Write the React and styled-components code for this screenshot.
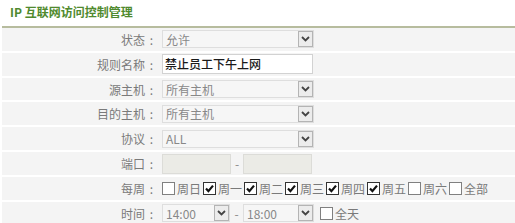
import React from 'react';
import styled, { createGlobalStyle } from 'styled-components';

const GlobalStyle = createGlobalStyle`
  body {
    margin: 0;
    background: #ffffff;
    font-family: "Noto Sans CJK SC", "Noto Sans", sans-serif;
    font-size: 12px;
  }
`;

const days = [
  { name: '周日', on: false },
  { name: '周一', on: true },
  { name: '周二', on: true },
  { name: '周三', on: true },
  { name: '周四', on: true },
  { name: '周五', on: true },
  { name: '周六', on: false },
  { name: '全部', on: false },
];

const Check = ({ on, label }) => (
  <CheckItem>
    <Box on={on ? 1 : 0}>
      {on && (
        <svg width="11" height="11" viewBox="0 0 11 11">
          <path d="M2 5.6 L4.4 8.2 L9 2.6" fill="none" stroke="#111" strokeWidth="2.2" />
        </svg>
      )}
    </Box>
    <CheckText>{label}</CheckText>
  </CheckItem>
);

const Select = ({ value, width }) => (
  <SelectBox width={width}>
    <SelectText>{value}</SelectText>
    <Arrow>
      <svg width="9" height="6" viewBox="0 0 9 6">
        <path d="M1 1 L4.5 4.5 L8 1" fill="none" stroke="#444" strokeWidth="1.8" />
      </svg>
    </Arrow>
  </SelectBox>
);

const Row = ({ label, children }) => (
  <RowWrap>
    <Label>
      {label}
      <Colon>:</Colon>
    </Label>
    <Field>{children}</Field>
  </RowWrap>
);

export default function App() {
  return (
    <Page>
      <GlobalStyle />
      <Title>IP 互联网访问控制管理</Title>
      <Table>
        <Row label="状态">
          <Select value="允许" width={152} />
        </Row>
        <Row label="规则名称">
          <TextInput>禁止员工下午上网</TextInput>
        </Row>
        <Row label="源主机">
          <Select value="所有主机" width={152} />
        </Row>
        <Row label="目的主机">
          <Select value="所有主机" width={152} />
        </Row>
        <Row label="协议">
          <Select value="ALL" width={152} />
        </Row>
        <Row label="端口">
          <PortInput />
          <Dash>-</Dash>
          <PortInput />
        </Row>
        <Row label="每周">
          <Checks>
            {days.map((d) => (
              <Check key={d.name} on={d.on} label={d.name} />
            ))}
          </Checks>
        </Row>
        <Row label="时间">
          <Select value="14:00" width={68} />
          <Dash wide>-</Dash>
          <Select value="18:00" width={71} />
          <Spacer />
          <Check on={false} label="全天" />
        </Row>
      </Table>
    </Page>
  );
}

const Page = styled.div`
  width: 515px;
  height: 223px;
  overflow: hidden;
`;

const Title = styled.div`
  box-sizing: border-box;
  height: 28px;
  margin-left: 2px;
  padding-left: 8px;
  line-height: 24px;
  color: #4f8a2e;
  font-weight: bold;
  font-size: 12px;
  border-bottom: 2px solid #b7bc9e;
`;

const Table = styled.div`
  display: flex;
  flex-direction: column;
  margin-left: 2px;
`;

const RowWrap = styled.div`
  display: flex;
  align-items: center;
  height: 22.83px;
  background: #f4f4f4;
  border-bottom: 2px solid #ffffff;
`;

const Label = styled.div`
  display: flex;
  justify-content: flex-end;
  width: 156px;
  flex: none;
  color: #7a7a7a;
  white-space: nowrap;
`;

const Colon = styled.span`
  width: 13px;
  text-align: center;
`;

const Field = styled.div`
  display: flex;
  align-items: center;
  padding-left: 4px;
`;

const SelectBox = styled.div`
  display: flex;
  align-items: center;
  justify-content: space-between;
  width: ${(p) => p.width}px;
  height: 18px;
  box-sizing: border-box;
  border: 1px solid #dedede;
  background: #f6f6f6;
`;

const SelectText = styled.span`
  padding-left: 3px;
  color: #888888;
  white-space: nowrap;
`;

const Arrow = styled.span`
  display: flex;
  align-items: center;
  justify-content: center;
  width: 15px;
  height: 16px;
  box-sizing: border-box;
  border: 1px solid #b4b4b4;
  background: #ececec;
`;

const TextInput = styled.div`
  width: 151px;
  height: 20px;
  box-sizing: border-box;
  border: 1px solid #d2d2d2;
  background: #ffffff;
  color: #1a1a1a;
  padding-left: 2px;
  line-height: 18px;
  font-size: 12px;
  font-weight: 500;
  white-space: nowrap;
`;

const PortInput = styled.div`
  width: 69px;
  height: 20px;
  box-sizing: border-box;
  border: 1px solid #dcdcd8;
  background: #ebebe6;
`;

const Dash = styled.span`
  width: ${(p) => (p.wide ? 13 : 12)}px;
  text-align: center;
  color: #888888;
`;

const Spacer = styled.span`
  width: 6px;
`;

const Checks = styled.div`
  display: flex;
  align-items: center;
`;

const CheckItem = styled.span`
  display: flex;
  align-items: center;
  width: 41px;
  white-space: nowrap;
`;

const Box = styled.span`
  display: flex;
  align-items: center;
  justify-content: center;
  width: 13px;
  height: 13px;
  box-sizing: border-box;
  border: 1px solid ${(p) => (p.on ? '#333333' : '#808080')};
  background: #ffffff;
  margin-right: 2px;
`;

const CheckText = styled.span`
  color: #7a7a7a;
`;
